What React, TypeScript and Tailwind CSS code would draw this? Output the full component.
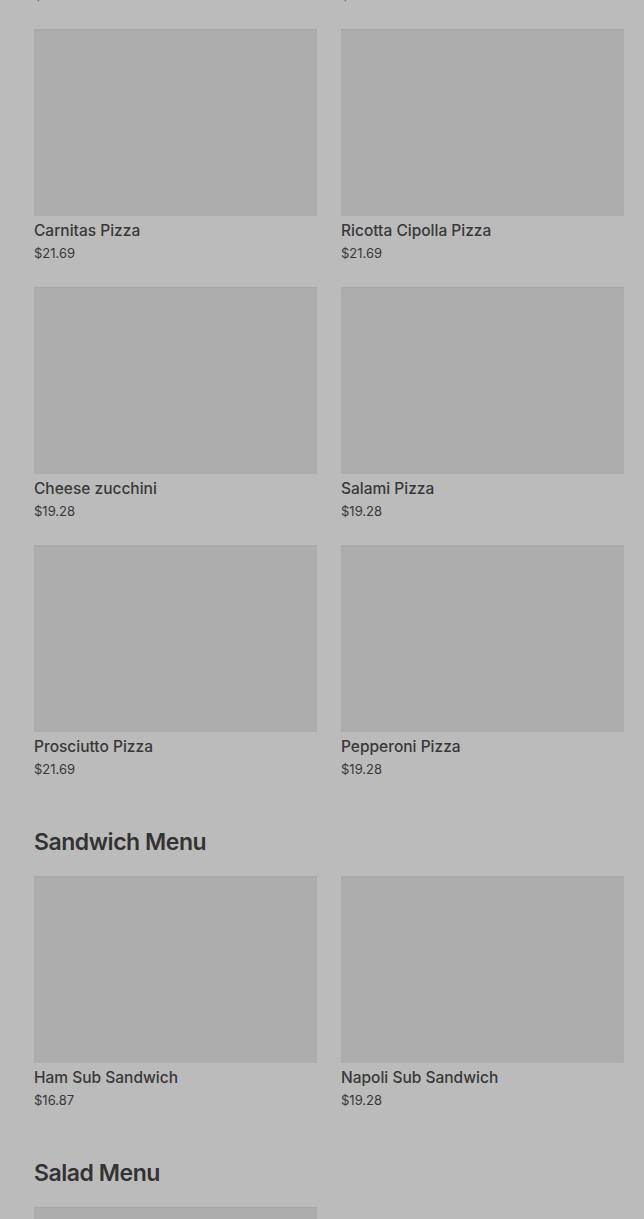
const sections: { title?: string; items: { name: string; price: string }[] }[] = [
  {
    items: [
      { name: "Margherita Pizza", price: "$21.69" },
      { name: "Veggie Pizza", price: "$19.28" },
      { name: "Carnitas Pizza", price: "$21.69" },
      { name: "Ricotta Cipolla Pizza", price: "$21.69" },
      { name: "Cheese zucchini", price: "$19.28" },
      { name: "Salami Pizza", price: "$19.28" },
      { name: "Prosciutto Pizza", price: "$21.69" },
      { name: "Pepperoni Pizza", price: "$19.28" },
    ],
  },
  {
    title: "Sandwich Menu",
    items: [
      { name: "Ham Sub Sandwich", price: "$16.87" },
      { name: "Napoli Sub Sandwich", price: "$19.28" },
    ],
  },
  {
    title: "Salad Menu",
    items: [{ name: "Caesar Salad", price: "$14.46" }],
  },
];

function MenuCard({ name, price }: { name: string; price: string }) {
  return (
    <div className="flex flex-col">
      <div className="h-[187px] w-full bg-[#adadad] shadow-[inset_0_1px_2px_rgba(0,0,0,0.04)]" />
      <div className="mt-[4px] text-[15.5px] leading-[22px] font-medium text-[#383838]">{name}</div>
      <div className="mt-[2px] text-[13px] leading-[18px] text-[#383838]">{price}</div>
    </div>
  );
}

export default function App() {
  return (
    <div
      className="h-[1219px] overflow-hidden bg-[#bbbbbb]"
      style={{ fontFamily: "Inter, 'Noto Sans', sans-serif" }}
    >
      <div className="mt-[-229px] pl-[34px] pr-[20px]">
        {sections.map((s, i) => (
          <section key={i} className={i > 0 ? "mt-[48px]" : ""}>
            {s.title && (
              <h2 className="mb-[18px] text-[23px] leading-[32px] font-semibold tracking-[-0.02em] text-[#333333]">
                {s.title}
              </h2>
            )}
            <div className="grid grid-cols-2 gap-x-6 gap-y-[25px]">
              {s.items.map((it) => (
                <MenuCard key={it.name} name={it.name} price={it.price} />
              ))}
            </div>
          </section>
        ))}
      </div>
    </div>
  );
}
